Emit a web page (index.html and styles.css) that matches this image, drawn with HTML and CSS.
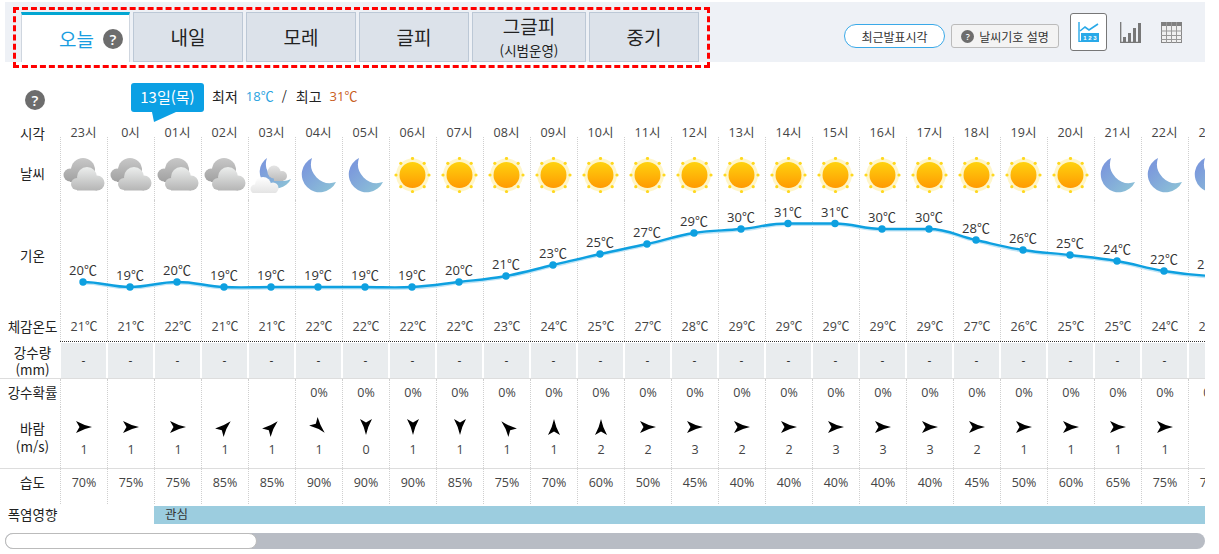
FILE: index.html
```html
<!DOCTYPE html>
<html lang="ko">
<head>
<meta charset="utf-8">
<title>단기예보</title>
<link rel="stylesheet" href="styles.css">
</head>
<body>
<svg class="sprite" aria-hidden="true">
  <defs>
    <linearGradient id="g-back" gradientUnits="userSpaceOnUse" x1="0" y1="1" x2="0" y2="30"><stop offset="0" stop-color="#c8c8c8"/><stop offset="1" stop-color="#989898"/></linearGradient>
    <linearGradient id="g-front" gradientUnits="userSpaceOnUse" x1="0" y1="10" x2="0" y2="34"><stop offset="0" stop-color="#eceeed"/><stop offset="1" stop-color="#b4b4b4"/></linearGradient>
    <linearGradient id="g-moon" x1="0" y1="0" x2="1" y2="1"><stop offset="0.2" stop-color="#7c9adc"/><stop offset="1" stop-color="#8ec6d6"/></linearGradient>
    <linearGradient id="g-sun" x1="0" y1="0" x2="0" y2="1"><stop offset="0" stop-color="#ffd20e"/><stop offset="1" stop-color="#ff9a02"/></linearGradient>
    <linearGradient id="g-gray" gradientUnits="userSpaceOnUse" x1="0" y1="8" x2="0" y2="25"><stop offset="0" stop-color="#e6e6e6"/><stop offset="1" stop-color="#b9b9b9"/></linearGradient>
    <linearGradient id="g-white" gradientUnits="userSpaceOnUse" x1="0" y1="20" x2="0" y2="36"><stop offset="0" stop-color="#ffffff"/><stop offset="1" stop-color="#e4e4e4"/></linearGradient>
    <symbol id="i-cloud" viewBox="0 0 46 36">
      <g fill="url(#g-back)"><circle cx="22" cy="13" r="12"/><circle cx="9" cy="18" r="6.5"/><rect x="9" y="13" width="20" height="12"/></g>
      <g fill="url(#g-front)"><circle cx="26" cy="20" r="10"/><circle cx="16" cy="27" r="6"/><circle cx="36" cy="26" r="7.5"/><rect x="16" y="24" width="20" height="9.5"/></g>
    </symbol>
    <symbol id="i-moon" viewBox="0 0 46 36">
      <path fill="url(#g-moon)" d="M16 1A18 18 0 1 0 40 25A19 19 0 0 1 16 1Z"/>
    </symbol>
    <symbol id="i-mooncloud" viewBox="0 0 46 36">
      <path fill="url(#g-moon)" d="M18 1A16.5 16.5 0 1 0 42 22A17 17 0 0 1 18 1Z"/>
      <g fill="url(#g-gray)"><circle cx="25" cy="15" r="6.5"/><circle cx="33" cy="19" r="5"/><rect x="25" y="16" width="9" height="8"/></g>
      <g fill="url(#g-white)"><circle cx="14" cy="28" r="8"/><circle cx="6" cy="32" r="4.5"/><circle cx="24" cy="31" r="5.5"/><rect x="6" y="30" width="19" height="6"/></g>
    </symbol>
    <symbol id="i-sun" viewBox="0 0 46 36">
      <circle cx="22.5" cy="18" r="16.5" fill="#fff6c9"/>
      <circle cx="22.5" cy="18" r="13" fill="url(#g-sun)"/>
      <g fill="#ffd81f"><circle cx="22.5" cy="1.5" r="1.6"/><circle cx="22.5" cy="34.5" r="1.6"/><circle cx="6" cy="18" r="1.6"/><circle cx="39" cy="18" r="1.6"/><circle cx="10.8" cy="6.3" r="1.6"/><circle cx="34.2" cy="6.3" r="1.6"/><circle cx="10.8" cy="29.7" r="1.6"/><circle cx="34.2" cy="29.7" r="1.6"/></g>
    </symbol>
    <symbol id="i-arrow" viewBox="-12 -12 24 24">
      <path fill="#000" d="M8 0Q0-1.6-8-6L-4.5 0L-8 6Q0 1.6 8 0Z"/>
    </symbol>
  </defs>
</svg>

<header class="topbar">
  <nav class="tabs">
    <a class="tab tab-active"><span>오늘</span><span class="help help-tab">?</span></a>
    <a class="tab">내일</a>
    <a class="tab">모레</a>
    <a class="tab">글피</a>
    <a class="tab tab-wide"><span>그글피</span><small>(시범운영)</small></a>
    <a class="tab">중기</a>
  </nav>
  <div class="tools">
    <button class="btn-pill">최근발표시각</button>
    <button class="btn-legend"><span class="help help-small">?</span>날씨기호 설명</button>
    <div class="views">
      <span class="view view-active">
        <svg width="21" height="20" viewBox="0 0 21 20"><path d="M1 0V19.5H21" fill="none" stroke="#29a9e8" stroke-width="1.4"/><path d="M2 9L7 5L11 8L20 2" fill="none" stroke="#29a9e8" stroke-width="1.6"/><rect x="3" y="11" width="18" height="8" fill="#29a9e8"/><text x="12" y="17.5" class="icon-nums">1 2 3</text></svg>
      </span>
      <span class="view">
        <svg width="21" height="21" viewBox="0 0 21 21" fill="#777"><path d="M.7 0V20.3H21" fill="none" stroke="#777" stroke-width="1.3"/><rect x="3" y="15" width="3" height="5"/><rect x="8" y="11" width="3" height="9"/><rect x="13" y="6" width="3" height="14"/><rect x="18" y="1" width="3" height="19"/></svg>
      </span>
      <span class="view">
        <svg width="21" height="21" viewBox="0 0 21 21"><rect x=".5" y=".5" width="20" height="20" fill="#f0f0f0" stroke="#888"/><rect x="0" y="0" width="21" height="4" fill="#808080"/><path d="M0 9H21M0 13.5H21M0 17.5H21M5.5 0V21M10.5 0V21M15.5 0V21" stroke="#999" fill="none"/></svg>
      </span>
    </div>
  </div>
</header>

<section class="summary">
  <span class="help help-summary">?</span>
  <div class="balloon">13일(목)</div>
  <div class="minmax">
    <span>최저</span><span class="low">18℃</span><span class="slash">/</span><span>최고</span><span class="high">31℃</span>
  </div>
</section>

<main class="forecast">
  <div class="row row-time">
    <div class="label">시각</div>
    <div class="hour">23시</div><div class="hour">0시</div><div class="hour">01시</div><div class="hour">02시</div><div class="hour">03시</div><div class="hour">04시</div><div class="hour">05시</div><div class="hour">06시</div><div class="hour">07시</div><div class="hour">08시</div><div class="hour">09시</div><div class="hour">10시</div><div class="hour">11시</div><div class="hour">12시</div><div class="hour">13시</div><div class="hour">14시</div><div class="hour">15시</div><div class="hour">16시</div><div class="hour">17시</div><div class="hour">18시</div><div class="hour">19시</div><div class="hour">20시</div><div class="hour">21시</div><div class="hour">22시</div><div class="hour">23시</div>
  </div>

  <div class="row row-sky">
    <div class="label label-sky">날씨</div>
    <div class="cell"><svg class="sky"><use href="#i-cloud"/></svg></div>
    <div class="cell"><svg class="sky"><use href="#i-cloud"/></svg></div>
    <div class="cell"><svg class="sky"><use href="#i-cloud"/></svg></div>
    <div class="cell"><svg class="sky"><use href="#i-cloud"/></svg></div>
    <div class="cell"><svg class="sky"><use href="#i-mooncloud"/></svg></div>
    <div class="cell"><svg class="sky"><use href="#i-moon"/></svg></div>
    <div class="cell"><svg class="sky"><use href="#i-moon"/></svg></div>
    <div class="cell"><svg class="sky"><use href="#i-sun"/></svg></div>
    <div class="cell"><svg class="sky"><use href="#i-sun"/></svg></div>
    <div class="cell"><svg class="sky"><use href="#i-sun"/></svg></div>
    <div class="cell"><svg class="sky"><use href="#i-sun"/></svg></div>
    <div class="cell"><svg class="sky"><use href="#i-sun"/></svg></div>
    <div class="cell"><svg class="sky"><use href="#i-sun"/></svg></div>
    <div class="cell"><svg class="sky"><use href="#i-sun"/></svg></div>
    <div class="cell"><svg class="sky"><use href="#i-sun"/></svg></div>
    <div class="cell"><svg class="sky"><use href="#i-sun"/></svg></div>
    <div class="cell"><svg class="sky"><use href="#i-sun"/></svg></div>
    <div class="cell"><svg class="sky"><use href="#i-sun"/></svg></div>
    <div class="cell"><svg class="sky"><use href="#i-sun"/></svg></div>
    <div class="cell"><svg class="sky"><use href="#i-sun"/></svg></div>
    <div class="cell"><svg class="sky"><use href="#i-sun"/></svg></div>
    <div class="cell"><svg class="sky"><use href="#i-sun"/></svg></div>
    <div class="cell"><svg class="sky"><use href="#i-moon"/></svg></div>
    <div class="cell"><svg class="sky"><use href="#i-moon"/></svg></div>
    <div class="cell"><svg class="sky"><use href="#i-moon"/></svg></div>
  </div>

  <div class="row row-chart">
    <div class="label label-chart">기온</div>
    <div class="chart">
      <div class="cell"></div><div class="cell"></div><div class="cell"></div><div class="cell"></div><div class="cell"></div><div class="cell"></div><div class="cell"></div><div class="cell"></div><div class="cell"></div><div class="cell"></div><div class="cell"></div><div class="cell"></div><div class="cell"></div><div class="cell"></div><div class="cell"></div><div class="cell"></div><div class="cell"></div><div class="cell"></div><div class="cell"></div><div class="cell"></div><div class="cell"></div><div class="cell"></div><div class="cell"></div><div class="cell"></div><div class="cell"></div>
      <svg class="curve" width="1175" height="110" viewBox="0 0 1175 110">
        <path class="curve-glow" d="M23 77C41.8 77 51.2 82 70 82S98.2 77 117 77S145.2 81 164 82S192.2 82 211 82S239.2 82 258 82S286.2 82 305 82S333.2 83 352 82S380.2 79.2 399 77S427.2 74.4 446 71S474.2 64.4 493 60S521.2 53.2 540 49S568.2 43.2 587 39S615.2 31 634 28S662.2 25.9 681 24S709.2 18.5 728 18.5S756.2 18.5 775 18.5S803.2 24 822 24S850.2 24 869 24S897.2 30.8 916 35S944.2 42 963 45S991.2 47.8 1010 50S1038.2 52.8 1057 56S1085.2 63 1104 66S1132.2 70 1151 71"/>
        <path class="curve-line" d="M23 77C41.8 77 51.2 82 70 82S98.2 77 117 77S145.2 81 164 82S192.2 82 211 82S239.2 82 258 82S286.2 82 305 82S333.2 83 352 82S380.2 79.2 399 77S427.2 74.4 446 71S474.2 64.4 493 60S521.2 53.2 540 49S568.2 43.2 587 39S615.2 31 634 28S662.2 25.9 681 24S709.2 18.5 728 18.5S756.2 18.5 775 18.5S803.2 24 822 24S850.2 24 869 24S897.2 30.8 916 35S944.2 42 963 45S991.2 47.8 1010 50S1038.2 52.8 1057 56S1085.2 63 1104 66S1132.2 70 1151 71"/>
        <g class="dots">
          <circle cx="23" cy="77" r="3.7"/><circle cx="70" cy="82" r="3.7"/><circle cx="117" cy="77" r="3.7"/><circle cx="164" cy="82" r="3.7"/><circle cx="211" cy="82" r="3.7"/><circle cx="258" cy="82" r="3.7"/><circle cx="305" cy="82" r="3.7"/><circle cx="352" cy="82" r="3.7"/><circle cx="399" cy="77" r="3.7"/><circle cx="446" cy="71" r="3.7"/><circle cx="493" cy="60" r="3.7"/><circle cx="540" cy="49" r="3.7"/><circle cx="587" cy="39" r="3.7"/><circle cx="634" cy="28" r="3.7"/><circle cx="681" cy="24" r="3.7"/><circle cx="728" cy="18.5" r="3.7"/><circle cx="775" cy="18.5" r="3.7"/><circle cx="822" cy="24" r="3.7"/><circle cx="869" cy="24" r="3.7"/><circle cx="916" cy="35" r="3.7"/><circle cx="963" cy="45" r="3.7"/><circle cx="1010" cy="50" r="3.7"/><circle cx="1057" cy="56" r="3.7"/><circle cx="1104" cy="66" r="3.7"/><circle cx="1151" cy="71" r="3.7"/>
        </g>
        <g class="temps">
          <text x="23" y="70">20℃</text><text x="70" y="75">19℃</text><text x="117" y="70">20℃</text><text x="164" y="75">19℃</text><text x="211" y="75">19℃</text><text x="258" y="75">19℃</text><text x="305" y="75">19℃</text><text x="352" y="75">19℃</text><text x="399" y="70">20℃</text><text x="446" y="64">21℃</text><text x="493" y="53">23℃</text><text x="540" y="42">25℃</text><text x="587" y="32">27℃</text><text x="634" y="21">29℃</text><text x="681" y="17">30℃</text><text x="728" y="12">31℃</text><text x="775" y="12">31℃</text><text x="822" y="17">30℃</text><text x="869" y="17">30℃</text><text x="916" y="28">28℃</text><text x="963" y="38">26℃</text><text x="1010" y="43">25℃</text><text x="1057" y="49">24℃</text><text x="1104" y="59">22℃</text><text x="1151" y="64">21℃</text>
        </g>
      </svg>
    </div>
  </div>

  <div class="row row-feels">
    <div class="label">체감온도</div>
    <div class="cell">21℃</div><div class="cell">21℃</div><div class="cell">22℃</div><div class="cell">21℃</div><div class="cell">21℃</div><div class="cell">22℃</div><div class="cell">22℃</div><div class="cell">22℃</div><div class="cell">22℃</div><div class="cell">23℃</div><div class="cell">24℃</div><div class="cell">25℃</div><div class="cell">27℃</div><div class="cell">28℃</div><div class="cell">29℃</div><div class="cell">29℃</div><div class="cell">29℃</div><div class="cell">29℃</div><div class="cell">29℃</div><div class="cell">27℃</div><div class="cell">26℃</div><div class="cell">25℃</div><div class="cell">25℃</div><div class="cell">24℃</div><div class="cell">23℃</div>
  </div>

  <div class="row row-rain">
    <div class="label label-two"><span>강수량</span><span>(mm)</span></div>
    <div class="rain">-</div><div class="rain">-</div><div class="rain">-</div><div class="rain">-</div><div class="rain">-</div><div class="rain">-</div><div class="rain">-</div><div class="rain">-</div><div class="rain">-</div><div class="rain">-</div><div class="rain">-</div><div class="rain">-</div><div class="rain">-</div><div class="rain">-</div><div class="rain">-</div><div class="rain">-</div><div class="rain">-</div><div class="rain">-</div><div class="rain">-</div><div class="rain">-</div><div class="rain">-</div><div class="rain">-</div><div class="rain">-</div><div class="rain">-</div><div class="rain">-</div>
  </div>

  <div class="row row-prob">
    <div class="label">강수확률</div>
    <div class="cell"></div><div class="cell"></div><div class="cell"></div><div class="cell"></div><div class="cell"></div><div class="cell">0%</div><div class="cell">0%</div><div class="cell">0%</div><div class="cell">0%</div><div class="cell">0%</div><div class="cell">0%</div><div class="cell">0%</div><div class="cell">0%</div><div class="cell">0%</div><div class="cell">0%</div><div class="cell">0%</div><div class="cell">0%</div><div class="cell">0%</div><div class="cell">0%</div><div class="cell">0%</div><div class="cell">0%</div><div class="cell">0%</div><div class="cell">0%</div><div class="cell">0%</div><div class="cell">0%</div>
  </div>

  <div class="row row-wind">
    <div class="label label-two label-wind"><span>바람</span><span>(m/s)</span></div>
    <div class="cell"><svg class="arrow"><use href="#i-arrow"/></svg>1</div>
    <div class="cell"><svg class="arrow"><use href="#i-arrow"/></svg>1</div>
    <div class="cell"><svg class="arrow"><use href="#i-arrow"/></svg>1</div>
    <div class="cell"><svg class="arrow to-ne"><use href="#i-arrow"/></svg>1</div>
    <div class="cell"><svg class="arrow to-ne"><use href="#i-arrow"/></svg>1</div>
    <div class="cell"><svg class="arrow to-se"><use href="#i-arrow"/></svg>1</div>
    <div class="cell"><svg class="arrow to-s"><use href="#i-arrow"/></svg>0</div>
    <div class="cell"><svg class="arrow to-s"><use href="#i-arrow"/></svg>1</div>
    <div class="cell"><svg class="arrow to-s"><use href="#i-arrow"/></svg>1</div>
    <div class="cell"><svg class="arrow to-nw"><use href="#i-arrow"/></svg>1</div>
    <div class="cell"><svg class="arrow to-n"><use href="#i-arrow"/></svg>1</div>
    <div class="cell"><svg class="arrow to-n"><use href="#i-arrow"/></svg>2</div>
    <div class="cell"><svg class="arrow"><use href="#i-arrow"/></svg>2</div>
    <div class="cell"><svg class="arrow"><use href="#i-arrow"/></svg>3</div>
    <div class="cell"><svg class="arrow"><use href="#i-arrow"/></svg>2</div>
    <div class="cell"><svg class="arrow"><use href="#i-arrow"/></svg>2</div>
    <div class="cell"><svg class="arrow"><use href="#i-arrow"/></svg>3</div>
    <div class="cell"><svg class="arrow"><use href="#i-arrow"/></svg>3</div>
    <div class="cell"><svg class="arrow"><use href="#i-arrow"/></svg>3</div>
    <div class="cell"><svg class="arrow"><use href="#i-arrow"/></svg>2</div>
    <div class="cell"><svg class="arrow"><use href="#i-arrow"/></svg>1</div>
    <div class="cell"><svg class="arrow"><use href="#i-arrow"/></svg>1</div>
    <div class="cell"><svg class="arrow"><use href="#i-arrow"/></svg>1</div>
    <div class="cell"><svg class="arrow"><use href="#i-arrow"/></svg>1</div>
    <div class="cell"></div>
  </div>

  <div class="row row-humid">
    <div class="label">습도</div>
    <div class="cell">70%</div><div class="cell">75%</div><div class="cell">75%</div><div class="cell">85%</div><div class="cell">85%</div><div class="cell">90%</div><div class="cell">90%</div><div class="cell">90%</div><div class="cell">85%</div><div class="cell">75%</div><div class="cell">70%</div><div class="cell">60%</div><div class="cell">50%</div><div class="cell">45%</div><div class="cell">40%</div><div class="cell">40%</div><div class="cell">40%</div><div class="cell">40%</div><div class="cell">40%</div><div class="cell">45%</div><div class="cell">50%</div><div class="cell">60%</div><div class="cell">65%</div><div class="cell">75%</div><div class="cell">75%</div>
  </div>

  <div class="row row-heat">
    <div class="label">폭염영향</div>
    <div class="heat-bar">관심</div>
  </div>
</main>

<div class="scroll-track"><div class="scroll-thumb"></div></div>
</body>
</html>
```
FILE: styles.css
```css
* { box-sizing: border-box; }

html, body { margin: 0; padding: 0; }

body {
  background: #fff;
  color: #333;
  font-family: "Open Sans", "Noto Sans CJK KR", "Noto Sans", sans-serif;
  font-size: 12px;
}

.sprite { position: absolute; width: 0; height: 0; }

/* top bar */
.topbar {
  display: flex;
  align-items: flex-start;
  height: 60px;
  width: 1200px;
  margin: 2px 0 0 5px;
  background: #eef1f6;
}

.tabs {
  position: relative;
  display: flex;
  gap: 3px;
  margin: 10px 0 0 16px;
  height: 50px;
}

.tabs::after {
  content: "";
  position: absolute;
  top: -5px;
  right: -11px;
  bottom: -6px;
  left: -8px;
  border: 3px dashed #f00;
  pointer-events: none;
}

.tab {
  display: flex;
  flex-direction: column;
  align-items: center;
  justify-content: center;
  width: 110px;
  background: #dce2ea;
  border: 1px solid #bcc8d6;
  color: #222;
  font-family: "Noto Sans CJK KR", sans-serif;
  font-size: 19px;
  line-height: 22px;
}

.tab-active {
  flex-direction: row;
  justify-content: flex-start;
  gap: 9px;
  width: 109px;
  padding-left: 37px;
  background: #fff;
  border-width: 3px 1px 0;
  border-top-color: #02a6d2;
  border-left-color: #cfd6df;
  border-right-color: #cfd6df;
  color: #1a9de0;
}

.tab-wide { width: 114px; }

.tab small {
  margin-top: 4px;
  font-size: 13.5px;
  line-height: 18px;
}

.help {
  display: inline-flex;
  flex: none;
  align-items: center;
  justify-content: center;
  border-radius: 50%;
  background: #6d6d6d;
  color: #fff;
  font-family: "Open Sans", sans-serif;
  font-weight: 600;
}

.help-tab { width: 20px; height: 20px; font-size: 15px; }
.help-small { width: 13px; height: 13px; font-size: 9px; margin-right: 5px; }
.help-summary { width: 20px; height: 20px; font-size: 15px; margin: 7px 0 0 25px; }

.tools {
  display: flex;
  align-items: flex-start;
  margin-left: auto;
  margin-right: 23px;
}

.btn-pill,
.btn-legend {
  display: flex;
  align-items: center;
  justify-content: center;
  height: 24px;
  margin-top: 22px;
  padding: 0;
  color: #333;
  font-family: "Noto Sans CJK KR", sans-serif;
  font-size: 12px;
}

.btn-pill {
  width: 101px;
  background: #fff;
  border: 1px solid #3aa9e8;
  border-radius: 12px;
}

.btn-legend {
  width: 108px;
  margin-left: 6px;
  background: #f3f3f3;
  border: 1px solid #bbb;
  border-radius: 3px;
}

.views {
  display: flex;
  align-items: flex-start;
  gap: 20px;
  margin: 11px 0 0 11px;
}

.view {
  display: flex;
  align-items: center;
  justify-content: center;
  width: 21px;
  height: 38px;
}

.view-active {
  width: 37px;
  margin-right: -7px;
  background: #fff;
  border: 1px solid #777;
  border-radius: 3px;
}

.icon-nums {
  fill: #fff;
  font-family: "Liberation Sans", sans-serif;
  font-size: 6px;
  font-weight: bold;
  text-anchor: middle;
}

/* summary */
.summary {
  display: flex;
  align-items: flex-start;
  height: 41px;
  margin-top: 21px;
}

.balloon {
  position: relative;
  width: 73px;
  height: 29px;
  margin-left: 86px;
  background: #0ba0e4;
  border-radius: 3px;
  color: #fff;
  font-family: "Noto Sans CJK KR", sans-serif;
  font-size: 15px;
  line-height: 27px;
  text-align: center;
}

.balloon::after {
  content: "";
  position: absolute;
  top: 29px;
  left: 21px;
  width: 24px;
  height: 10px;
  background: #0ba0e4;
  clip-path: polygon(0 0, 100% 0, 2px 100%);
}

.minmax {
  display: flex;
  gap: 8px;
  margin: 3px 0 0 8px;
  color: #222;
  font-family: "Noto Sans CJK KR", sans-serif;
  font-size: 14px;
  line-height: 20px;
}

.low, .high { font-family: "Open Sans", "Noto Sans CJK KR", sans-serif; font-size: 13px; }
.low { color: #29a3e0; }
.high { color: #c9601e; }
.slash { margin-right: 1px; font-size: 13px; }

/* grid */
.row {
  display: flex;
  width: 1205px;
  overflow: hidden;
}

.label {
  display: flex;
  flex-direction: column;
  flex: 0 0 60px;
  align-items: center;
  padding-left: 5px;
  color: #222;
  font-family: "Noto Sans CJK KR", sans-serif;
  font-size: 13.5px;
  line-height: 18px;
  white-space: nowrap;
}

.hour,
.cell {
  flex: 0 0 47px;
  width: 47px;
  color: #444;
  font-size: 12.5px;
  text-align: center;
}

.cell { border-left: 1px dotted #cfcfcf; }

.row-time { height: 18px; }
.row-time .hour { line-height: 18px; }

.row-sky { height: 63px; margin-top: -5px; }
.row-sky .label { padding-top: 27px; }
.sky { display: block; width: 46px; height: 36px; margin-top: 20px; }

.row-chart { height: 114px; }
.label-chart { padding-top: 46px; }
.chart {
  position: relative;
  display: flex;
  flex: 0 0 1175px;
}

.curve {
  position: absolute;
  top: 5px;
  left: 0;
  overflow: visible;
}

.curve-line { fill: none; stroke: #0ea0e0; stroke-width: 2.4; }
.curve-glow { fill: none; stroke: #bfe4f6; stroke-width: 2; transform: translateY(1.6px); }
.dots circle { fill: #0ea0e0; }
.temps text {
  fill: #333;
  font-size: 13px;
  text-anchor: middle;
}

.row-feels {
  height: 27px;
  line-height: 25px;
}
.row-feels .label { line-height: 25px; }

.row-rain {
  position: relative;
  height: 38px;
  padding-top: 2px;
  border-bottom: 1px solid #ddd;
}

.row-rain::before {
  content: "";
  position: absolute;
  top: 0;
  left: 60px;
  right: 0;
  border-top: 1px dotted #333;
}

.rain {
  flex: 0 0 47px;
  border-left: 1px solid #fff;
  border-right: 1px solid #fff;
  background: #e9ecee;
  color: #333;
  line-height: 35px;
  text-align: center;
}

.label-two { padding-top: 1px; line-height: 17px; }

.row-prob { height: 28px; line-height: 27px; }
.row-prob .label { line-height: 27px; }

.row-wind {
  height: 62px;
  border-bottom: 1px solid #ddd;
  line-height: 22px;
}

.label-two.label-wind { padding-top: 12px; line-height: 18px; }

.arrow {
  display: block;
  width: 24px;
  height: 24px;
  margin: 8px auto 0;
}

.to-ne { transform: rotate(-45deg); }
.to-se { transform: rotate(45deg); }
.to-s { transform: rotate(90deg); }
.to-nw { transform: rotate(-135deg); }
.to-n { transform: rotate(-90deg); }

.row-humid { height: 35px; line-height: 27px; }
.row-humid .label { line-height: 27px; }

.row-heat { height: 18px; margin-top: 2px; }
.row-heat .label { line-height: 16px; }

.heat-bar {
  flex: 0 0 1051px;
  margin-left: 94px;
  padding-left: 11px;
  background: #9ccddf;
  color: #333;
  font-family: "Noto Sans CJK KR", sans-serif;
  font-size: 12.5px;
  line-height: 16px;
}

/* scrollbar */
.scroll-track {
  width: 1200px;
  height: 16px;
  margin: 9px 0 0 5px;
  background: #b8bcc4;
  border-radius: 8px;
}

.scroll-thumb {
  width: 252px;
  height: 16px;
  background: #fff;
  border: 1px solid #bbb;
  border-radius: 8px;
}
```
